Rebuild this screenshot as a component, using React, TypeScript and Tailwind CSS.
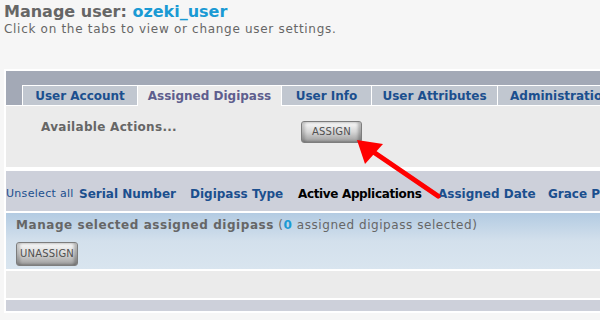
import React from "react";

const btn =
  "flex items-center justify-center rounded-[3px] border border-[#7d7d7d] bg-linear-to-b from-[#fbfbfb] via-[#d6d6d6] to-[#9c9c9c] shadow-[inset_3px_0_3px_rgba(0,0,0,0.18),inset_-3px_0_3px_rgba(0,0,0,0.25)] text-[10px] leading-none text-[#505050] tracking-[0.2px]";

export default function App() {
  return (
    <div
      className="relative w-[600px] h-[320px] overflow-hidden bg-[#f6f6f6] text-[#666666]"
      style={{ fontFamily: '"DejaVu Sans", Verdana, sans-serif' }}
    >
      <div className="pl-[4px] pt-[2px]">
        <div className="text-[16px] font-bold leading-[20px] text-[#666666]">
          Manage user: <span className="text-[#1a9ad4]">ozeki_user</span>
        </div>
        <div className="text-[12px] leading-[14px] tracking-[0.7px] text-[#666666] whitespace-nowrap">
          Click on the tabs to view or change user settings.
        </div>
      </div>

      <div className="ml-[4px] mt-[33px] w-[640px] border-[2px] border-white bg-white">
        {/* tab band */}
        <div className="flex h-[34px] items-end bg-[#a3a9b6] pl-[16px] whitespace-nowrap">
          <div className="flex h-[20px] w-[115px] shrink-0 items-center justify-center border-l border-t border-white bg-[#c1c7d0] text-[12px] font-bold text-[#1b4f8e]">
            User Account
          </div>
          <div className="flex h-[21px] -mb-px w-[144px] shrink-0 items-center justify-center border-l border-t border-white bg-[#ebebeb] pb-px text-[12px] font-bold text-[#5e5e8e]">
            Assigned Digipass
          </div>
          <div className="flex h-[20px] w-[90px] shrink-0 items-center justify-center border-l border-t border-white bg-[#c1c7d0] text-[12px] font-bold text-[#1b4f8e]">
            User Info
          </div>
          <div className="flex h-[20px] w-[126px] shrink-0 items-center justify-center border-l border-t border-white bg-[#c1c7d0] text-[12px] font-bold text-[#1b4f8e]">
            User Attributes
          </div>
          <div className="flex h-[20px] w-[130px] shrink-0 items-center border-l border-t border-r border-white bg-[#c1c7d0] pl-[12px] text-[12px] font-bold text-[#1b4f8e]">
            Administration
          </div>
        </div>
        {/* actions */}
        <div className="flex h-[62px] items-start border-t border-white bg-[#ebebeb] pl-[35px] pt-[14px]">
          <div className="w-[260px] shrink-0 text-[12px] font-bold leading-[14px] text-[#666666] tracking-[0.3px]">
            Available Actions...
          </div>
          <div className={`${btn} mt-px h-[22px] w-[61px]`}>ASSIGN</div>
        </div>
        {/* header row */}
        <div className="mt-[4px] flex h-[40px] items-center bg-[#cdd0da] pt-[6px] text-[12px] font-bold text-[#1b4f8e] whitespace-nowrap">
          <span className="w-[73px] shrink-0 text-[11px] font-normal tracking-[0.3px]">Unselect all</span>
          <span className="w-[111px] shrink-0">Serial Number</span>
          <span className="w-[108px] shrink-0">Digipass Type</span>
          <span className="w-[140px] shrink-0 text-black tracking-[-0.35px]">Active Applications</span>
          <span className="w-[110px] shrink-0">Assigned Date</span>
          <span className="shrink-0">Grace Period</span>
        </div>
        {/* manage selected */}
        <div className="mt-[2px] h-[56px] bg-linear-to-b from-[#b3cbe2] via-[#d3e0ec] to-[#d9e5ef] pl-[10px] pt-[5px]">
          <div className="text-[12px] leading-[14px] tracking-[0.55px] text-[#666666] whitespace-nowrap">
            <span className="font-bold">Manage selected assigned digipass</span> (
            <span className="font-bold text-[#1a9ad4]">0</span> assigned digipass selected)
          </div>
          <div className={`${btn} mt-[10px] h-[24px] w-[62px]`}>UNASSIGN</div>
        </div>
        <div className="mt-[2px] h-[27px] bg-[#ebebeb]" />
        <div className="mt-[2px] h-[11px] bg-[#cdd0da]" />
      </div>

      <svg className="absolute left-0 top-0" width="600" height="320" viewBox="0 0 600 320">
        <line x1="438" y1="196" x2="372" y2="151" stroke="#ff0000" strokeWidth="5" strokeLinecap="round" />
        <polygon points="357,140 383,144 365,164" fill="#ff0000" />
      </svg>
    </div>
  );
}
